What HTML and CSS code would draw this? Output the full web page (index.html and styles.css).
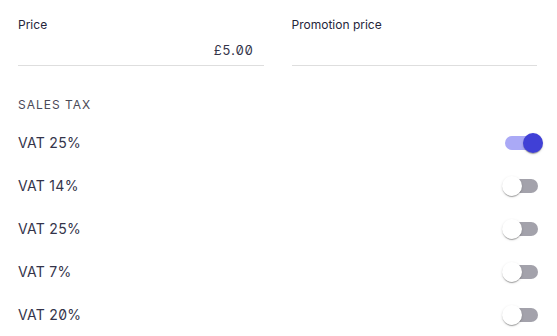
FILE: index.html
```html
<!DOCTYPE html>
<html>
<head>
<meta charset="utf-8">
<link rel="stylesheet" href="styles.css">
</head>
<body>
<div class="page">
  <div class="fields">
    <div class="field">
      <div class="label">Price</div>
      <div class="input">£5.00</div>
    </div>
    <div class="field">
      <div class="label">Promotion price</div>
      <div class="input"></div>
    </div>
  </div>
  <div class="section">SALES TAX</div>
  <div class="rows">
    <div class="row"><span class="name">VAT 25%</span><span class="switch on"><span class="track"></span><span class="thumb"></span></span></div>
    <div class="row"><span class="name">VAT 14%</span><span class="switch"><span class="track"></span><span class="thumb"></span></span></div>
    <div class="row"><span class="name">VAT 25%</span><span class="switch"><span class="track"></span><span class="thumb"></span></span></div>
    <div class="row"><span class="name">VAT 7%</span><span class="switch"><span class="track"></span><span class="thumb"></span></span></div>
    <div class="row"><span class="name">VAT 20%</span><span class="switch"><span class="track"></span><span class="thumb"></span></span></div>
  </div>
</div>
</body>
</html>
```
FILE: styles.css
```css
html, body { margin: 0; padding: 0; background: #fff; }
body { font-family: Inter, "Noto Sans", sans-serif; color: #2b2b40; }
.page { padding: 16px 20px 0 18px; }
.fields { display: grid; grid-template-columns: 1fr 1fr; column-gap: 28px; }
.field { display: flex; flex-direction: column; }
.label { font-size: 12px; line-height: 18px; color: #25253a; }
.input {
  height: 31px; line-height: 32px;
  border-bottom: 1px solid #dedede;
  text-align: right; padding-right: 10px;
  font-size: 13px; letter-spacing: 0.6px; color: #34344a;
  font-feature-settings: "zero", "tnum";
}
.section {
  margin-top: 31px; font-size: 12px; letter-spacing: 1px;
  color: #4a4a58; line-height: 16px;
}
.rows { margin-top: 8px; }
.row { display: flex; align-items: center; justify-content: space-between; height: 43px; }
.name { font-size: 14px; color: #34344a; letter-spacing: 0.3px; font-feature-settings: "zero"; }
.switch { position: relative; width: 41px; height: 20px; margin-right: -6px; }
.track { position: absolute; left: 3px; top: 3px; width: 33px; height: 14px; border-radius: 7px; background: #a3a2ab; }
.thumb { position: absolute; left: 0; top: 0; width: 20px; height: 20px; border-radius: 50%; background: #fff;
  box-shadow: 0 2px 1px -1px rgba(0,0,0,.2), 0 1px 1px rgba(0,0,0,.14), 0 1px 3px rgba(0,0,0,.12); }
.switch.on .track { background: #aaa9f6; }
.switch.on .thumb { left: 21px; background: #4040d6; }
```
